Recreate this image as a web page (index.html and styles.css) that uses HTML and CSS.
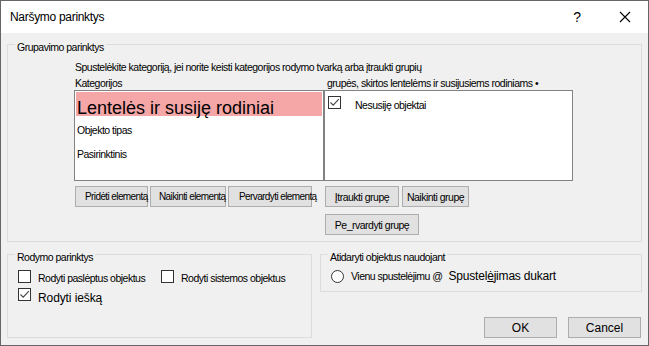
FILE: index.html
```html
<!DOCTYPE html>
<html lang="lt">

<head>
    <meta charset="UTF-8">
    <meta name="viewport" content="width=device-width, initial-scale=1.0">
    <title>Naršymo parinktys</title>
    <link rel="stylesheet" href="styles.css">
</head>

<body>
    <div class="window">
        <div class="titlebar">
            <span class="title">Naršymo parinktys</span>
            <span class="help">?</span>
            <svg class="close" width="12" height="12" viewBox="0 0 12 12">
                <path d="M1 1 L11 11 M11 1 L1 11" stroke="#000" stroke-width="1.1" fill="none" />
            </svg>
        </div>

        <div class="content">
            <fieldset class="group">
                <legend>Grupavimo parinktys</legend>
                <div class="grouping">
                    <p class="hint">Spustelėkite kategoriją, jei norite keisti kategorijos rodymo tvarką arba įtraukti grupių</p>
                    <div class="lists">
                        <div class="col">
                            <div class="cap">Kategorijos</div>
                            <div class="listbox">
                                <div class="item selected">Lentelės ir susiję rodiniai</div>
                                <div class="item">Objekto tipas</div>
                                <div class="item">Pasirinktinis</div>
                            </div>
                            <div class="btnrow left-btns">
                                <button class="btn shifted w73">Pridėti elementą</button>
                                <button class="btn shifted w76">Naikinti elementą</button>
                                <button class="btn shifted w84">Pervardyti elementą</button>
                            </div>
                        </div>
                        <div class="col right">
                            <div class="cap">grupės, skirtos lentelėms ir susijusiems rodiniams •</div>
                            <div class="listbox">
                                <div class="check-item">
                                    <span class="box">
                                        <svg width="11" height="11" viewBox="0 0 11 11">
                                            <path d="M1.5 5.5 L4.2 8.2 L9.8 2.2" stroke="#444" stroke-width="1.1" fill="none" />
                                        </svg>
                                    </span>
                                    <span class="check-text">Nesusiję objektai</span>
                                </div>
                            </div>
                            <div class="btnrow right-btns">
                                <button class="btn w74"><u>Į</u>traukti grupę</button>
                                <button class="btn w67">Naikinti grupę</button>
                            </div>
                            <div class="btnrow right-btns second">
                                <button class="btn w94">Pe_rvardyti grupę</button>
                            </div>
                        </div>
                    </div>
                </div>
            </fieldset>

            <div class="lower">
                <fieldset class="group">
                    <legend>Rodymo parinktys</legend>
                    <div class="display">
                        <div class="opt-row">
                            <div class="opt wide">
                                <span class="box"></span>
                                <span class="opt-text">Rodyti paslėptus objektus</span>
                            </div>
                            <div class="opt">
                                <span class="box"></span>
                                <span class="opt-text">Rodyti sistemos objektus</span>
                            </div>
                        </div>
                        <div class="opt-row second">
                            <div class="opt">
                                <span class="box">
                                    <svg width="11" height="11" viewBox="0 0 11 11">
                                        <path d="M1.5 5.5 L4.2 8.2 L9.8 2.2" stroke="#444" stroke-width="1.1" fill="none" />
                                    </svg>
                                </span>
                                <span class="opt-text big">Rodyti iešką</span>
                            </div>
                        </div>
                    </div>
                </fieldset>

                <div class="right-side">
                    <fieldset class="group">
                        <legend>Atidaryti objektus naudojant</legend>
                        <div class="opening">
                            <span class="radio"></span>
                            <span class="radio-text">Vienu spustelėjimu @</span>
                            <span class="radio-text big">Spustel<u>ė</u>jimas dukart</span>
                        </div>
                    </fieldset>
                    <div class="actions">
                        <button class="btn action">OK</button>
                        <button class="btn action">Cancel</button>
                    </div>
                </div>
            </div>
        </div>
    </div>
</body>

</html>
```

FILE: styles.css
```css
* {
    box-sizing: border-box;
}

body {
    margin: 0;
    background-color: #f0f0f0;
    font-family: 'Liberation Sans', Arial, sans-serif;
    font-size: 10.5px;
    letter-spacing: -0.5px;
    color: #000;
}

.window {
    width: 649px;
    height: 346px;
    border: 1px solid #666;
    background-color: #f0f0f0;
    overflow: hidden;
}

.titlebar {
    display: flex;
    align-items: center;
    height: 32px;
    background-color: #fff;
    letter-spacing: normal;
}

.title {
    font-size: 12px;
    letter-spacing: -0.3px;
    margin-left: 9px;
    flex: 1;
}

.help {
    font-size: 14px;
    margin-right: 38px;
}

.close {
    margin-right: 17px;
}

.content {
    padding: 2px 6px 0 6px;
}

/* group boxes */
.group {
    margin: 0;
    padding: 0;
    min-width: 0;
    border: 1px solid #dcdcdc;
}

.group legend {
    margin-left: 7px;
    padding: 6px 2px 0 2px;
    line-height: 13px;
}

.grouping {
    padding: 7px 0 6px 66px;
}

.hint {
    margin: 0 0 0 1px;
    line-height: 13px;
}

.lists {
    display: grid;
    grid-template-columns: 250px 249px;
    margin-top: 3px;
}

.cap {
    line-height: 13px;
    padding-left: 1px;
    white-space: nowrap;
}

.right .cap {
    padding-left: 3px;
}

.listbox {
    height: 91px;
    border: 1px solid #828282;
    background-color: #fff;
    padding-top: 1px;
}

.item {
    height: 24px;
    line-height: 28px;
    padding-left: 2px;
}

.item.selected {
    margin: 0 1px;
    padding: 6px 0 0 1px;
    line-height: 20px;
    font-size: 18px;
    letter-spacing: normal;
    background-color: #f5a6a6;
    white-space: nowrap;
}

.check-item {
    display: flex;
    align-items: flex-start;
    padding: 4px 0 0 3px;
}

.box {
    display: inline-flex;
    align-items: center;
    justify-content: center;
    flex: none;
    width: 13px;
    height: 13px;
    border: 1px solid #333;
    background-color: #fff;
}

.check-text {
    margin-left: 14px;
    padding-top: 3px;
    line-height: 13px;
}

/* buttons */
.btnrow {
    display: flex;
    margin-top: 5px;
    margin-left: 1px;
}

.btnrow.second {
    margin-top: 7px;
}

.left-btns {
    gap: 2px;
}

.right-btns {
    gap: 3px;
}

.btn {
    height: 21px;
    padding: 0;
    border: 1px solid #adadad;
    background-color: #e1e1e1;
    font-family: 'Liberation Sans', Arial, sans-serif;
    font-size: 10.5px;
    letter-spacing: -0.5px;
    color: #000;
    white-space: nowrap;
}

.btn.shifted {
    text-align: left;
    padding-left: 10px;
    font-size: 10px;
    letter-spacing: -0.6px;
    overflow: visible;
}

.w73 { width: 73px; }
.w76 { width: 76px; }
.w84 { width: 84px; }
.w74 { width: 74px; }
.w67 { width: 67px; }
.w94 { width: 94px; }

.btn.w73 {
    padding-left: 9px;
}

.btn.w76 {
    padding-left: 8px;
}

/* lower part */
.lower {
    display: grid;
    grid-template-columns: 305px 1fr;
    gap: 8px;
    margin-top: 3px;
}

.display {
    padding: 6px 0 1px 10px;
}

.opt-row {
    display: flex;
}

.opt-row.second {
    margin-top: 2px;
}

.opt {
    display: flex;
    align-items: flex-start;
    white-space: nowrap;
}

.opt.wide {
    width: 143px;
}

.opt-text {
    margin-left: 7px;
    line-height: 16px;
}

.opt-text.big {
    font-size: 12px;
    letter-spacing: -0.1px;
    line-height: 20px;
}

.opening {
    display: flex;
    align-items: center;
    padding: 5px 0 8px 10px;
    white-space: nowrap;
}

.radio {
    flex: none;
    width: 13px;
    height: 13px;
    border: 1px solid #333;
    border-radius: 50%;
    background-color: #fff;
    margin-right: 7px;
}

.radio-text {
    line-height: 13px;
    padding-top: 1px;
}

.radio-text.big {
    margin-left: 6px;
    font-size: 12px;
    letter-spacing: -0.2px;
}

.actions {
    display: flex;
    justify-content: flex-end;
    gap: 11px;
    margin-top: 25px;
    margin-right: 1px;
}

.btn.action {
    width: 73px;
    font-size: 12px;
    letter-spacing: normal;
}
```
